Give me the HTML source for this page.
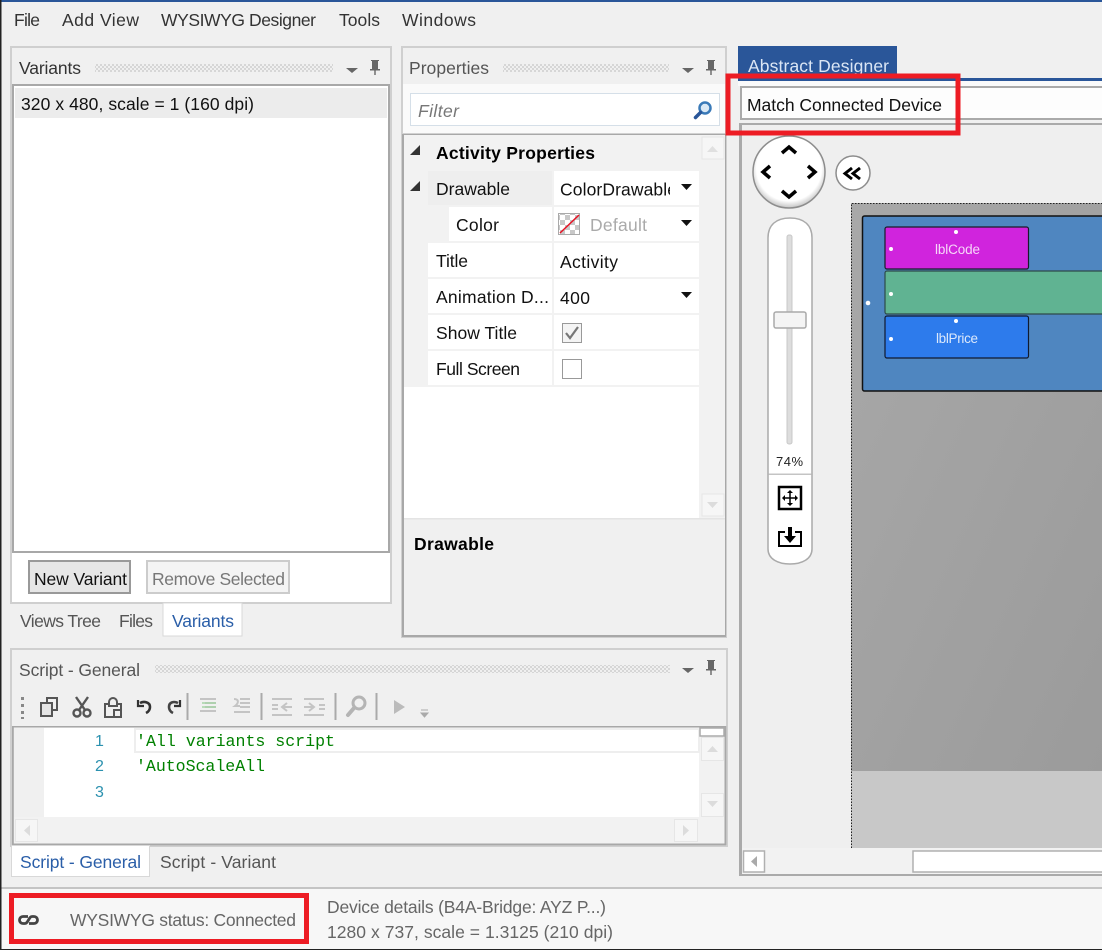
<!DOCTYPE html>
<html><head><meta charset="utf-8"><title>Designer</title>
<style>
html,body{margin:0;padding:0;background:#fff;width:1105px;height:950px;overflow:hidden}
svg{display:block;position:absolute;left:0;top:0}
text{font-family:"Liberation Sans",sans-serif;font-size:17.5px;fill:#333;white-space:pre}
.m{font-family:"Liberation Mono",monospace;font-size:16.6px;fill:#008000}
.n{fill:#2b91af;font-size:16px}
.b{font-weight:bold;fill:#000}
.k{fill:#111}
.g{fill:#666}
.bl{fill:#2a5ea8}
</style></head><body>
<svg width="1105" height="950" viewBox="0 0 1105 950" xmlns="http://www.w3.org/2000/svg">
<defs>
<pattern id="grip" width="4" height="4" patternUnits="userSpaceOnUse"><rect width="4" height="4" fill="#f0f0f0"/><rect width="2" height="2" fill="#d6d6d6"/><rect x="2" y="2" width="2" height="2" fill="#d6d6d6"/></pattern>
<linearGradient id="cv" x1="0" y1="0" x2="1" y2="1"><stop offset="0" stop-color="#a8a8a8"/><stop offset="1" stop-color="#9b9b9b"/></linearGradient>
<radialGradient id="ball" cx="0.5" cy="0.45" r="0.55"><stop offset="0.82" stop-color="#fff"/><stop offset="1" stop-color="#c4c4c4"/></radialGradient>
<pattern id="chk" width="10" height="10" patternUnits="userSpaceOnUse"><rect width="10" height="10" fill="#fff"/><rect width="5" height="5" fill="#c8c8c8"/><rect x="5" y="5" width="5" height="5" fill="#c8c8c8"/></pattern>
</defs>

<rect width="1105" height="950" fill="#f0f0f0"/>
<rect width="1105" height="2" fill="#2a5699"/>
<rect x="0" y="0" width="1.5" height="950" fill="#222"/>

<!-- Menu -->
<text x="14" y="26" textLength="26" lengthAdjust="spacing">File</text>
<text x="62" y="26" textLength="77" lengthAdjust="spacing">Add View</text>
<text x="161" y="26" textLength="155" lengthAdjust="spacing">WYSIWYG Designer</text>
<text x="339" y="26" textLength="41" lengthAdjust="spacing">Tools</text>
<text x="402" y="26" textLength="74" lengthAdjust="spacing">Windows</text>

<!-- Variants panel -->
<rect x="11" y="47" width="380" height="556" fill="#f0f0f0" stroke="#cfcfcf" stroke-width="2"/>
<text x="19" y="74" textLength="62" lengthAdjust="spacing">Variants</text>
<rect x="95" y="64" width="238" height="8" fill="url(#grip)"/>
<path d="M346 68h12l-6 5z" fill="#666"/>
<path d="M371 60h8v1h-1v8h2v1.500h-4.300v4.500h-1.400v-4.500h-4.300v-1.500h2v-8h-1z" fill="#666"/>
<rect x="12" y="84" width="378" height="518" fill="#fff"/>
<rect x="13" y="85" width="376" height="467" fill="#fff" stroke="#a8a8a8" stroke-width="2"/>
<rect x="15" y="88" width="372" height="30" fill="#ececec"/>
<text x="21" y="110" class="k" textLength="233" lengthAdjust="spacing">320 x 480, scale = 1 (160 dpi)</text>
<rect x="29" y="561" width="101" height="32" fill="#e6e6e6" stroke="#999" stroke-width="2"/>
<text x="34" y="585" class="k" textLength="93" lengthAdjust="spacing">New Variant</text>
<rect x="147" y="561" width="142" height="32" fill="#f4f4f4" stroke="#ccc" stroke-width="2"/>
<text x="152" y="585" style="fill:#777" textLength="133" lengthAdjust="spacing">Remove Selected</text>

<!-- Left tabs -->
<rect x="163" y="603" width="79" height="33" fill="#fff" stroke="#d8d8d8"/>
<text x="20" y="627" class="g" style="fill:#555" textLength="81" lengthAdjust="spacing">Views Tree</text>
<text x="119" y="627" style="fill:#555" textLength="34" lengthAdjust="spacing">Files</text>
<text x="172" y="627" class="bl" textLength="62" lengthAdjust="spacing">Variants</text>

<!-- Properties panel -->
<rect x="402" y="47" width="324" height="590" fill="#f0f0f0" stroke="#cfcfcf" stroke-width="2"/>
<text x="409" y="74" style="fill:#555" textLength="80" lengthAdjust="spacing">Properties</text>
<rect x="503" y="64" width="166" height="8" fill="url(#grip)"/>
<path d="M682 68h12l-6 5z" fill="#666"/>
<path d="M707 60h8v1h-1v8h2v1.500h-4.300v4.500h-1.400v-4.500h-4.300v-1.500h2v-8h-1z" fill="#666"/>
<rect x="403" y="84" width="322" height="50" fill="#fafafa"/>
<rect x="410.500" y="93.500" width="309" height="32" fill="#fff" stroke="#d5dfe8"/>
<text x="418" y="117" style="fill:#777;font-style:italic" textLength="41" lengthAdjust="spacing">Filter</text>
<circle cx="705" cy="108" r="5.500" fill="#dbe9f5" stroke="#3a7ab8" stroke-width="2.500"/>
<path d="M700.500 112.500l-5 5" stroke="#2a5699" stroke-width="3.500" stroke-linecap="round"/>
<rect x="403" y="133.500" width="322" height="2" fill="#a8a8a8"/>
<rect x="402" y="134" width="2" height="502" fill="#a8a8a8"/>
<rect x="724.500" y="134" width="1.500" height="502" fill="#a8a8a8"/>
<rect x="402" y="635" width="324" height="2" fill="#a8a8a8"/>
<rect x="404" y="135" width="321" height="383" fill="#f2f2f2"/>
<rect x="404" y="387" width="295" height="131" fill="#fff"/>
<rect x="404" y="518" width="321" height="117" fill="#f0f0f0"/>
<rect x="404" y="518" width="321" height="1.500" fill="#e4e4e4"/>

<!-- rows -->
<rect x="428" y="171" width="124" height="34" fill="#eee"/>
<rect x="554" y="171" width="145" height="34" fill="#fff"/>
<rect x="449" y="207" width="103" height="34" fill="#fff"/>
<rect x="554" y="207" width="145" height="34" fill="#fff"/>
<rect x="428" y="243" width="124" height="34" fill="#fff"/>
<rect x="554" y="243" width="145" height="34" fill="#fff"/>
<rect x="428" y="279" width="124" height="34" fill="#fff"/>
<rect x="554" y="279" width="145" height="34" fill="#fff"/>
<rect x="428" y="315" width="124" height="34" fill="#fff"/>
<rect x="554" y="315" width="145" height="34" fill="#fff"/>
<rect x="428" y="351" width="124" height="34" fill="#fff"/>
<rect x="554" y="351" width="145" height="34" fill="#fff"/>
<path d="M420 145v10h-10z" fill="#333"/>
<path d="M420 181v10h-10z" fill="#333"/>
<text x="436" y="159" class="b" textLength="159" lengthAdjust="spacing">Activity Properties</text>
<text x="436" y="195" class="k" textLength="74" lengthAdjust="spacing">Drawable</text>
<svg x="554" y="171" width="116" height="34"><text x="6" y="24.500" class="k" textLength="117" lengthAdjust="spacing">ColorDrawable</text></svg>
<path d="M681 184h11l-5.500 6z" fill="#111"/>
<text x="456" y="231" class="k" textLength="43" lengthAdjust="spacing">Color</text>
<rect x="558.500" y="213.500" width="21" height="21" fill="url(#chk)" stroke="#aaa"/>
<path d="M560 233l19-18" stroke="#e81123" stroke-width="1.500"/>
<text x="590" y="231" style="fill:#aaa" textLength="57" lengthAdjust="spacing">Default</text>
<path d="M681 220h11l-5.500 6z" fill="#111"/>
<text x="436" y="267" class="k" textLength="32" lengthAdjust="spacing">Title</text>
<text x="560" y="268" class="k" textLength="58" lengthAdjust="spacing">Activity</text>
<text x="436" y="303" class="k" textLength="113" lengthAdjust="spacing">Animation D...</text>
<text x="560" y="304" class="k" textLength="30" lengthAdjust="spacing">400</text>
<path d="M681 292h11l-5.500 6z" fill="#111"/>
<text x="436" y="339" class="k" textLength="81" lengthAdjust="spacing">Show Title</text>
<rect x="562.500" y="323.500" width="19" height="19" fill="#f4f4f4" stroke="#999"/>
<path d="M566 333l4 5 8-11" fill="none" stroke="#777" stroke-width="2.200"/>
<text x="436" y="375" class="k" textLength="84" lengthAdjust="spacing">Full Screen</text>
<rect x="562.500" y="359.500" width="19" height="19" fill="#fff" stroke="#999"/>
<!-- grid scrollbar -->
<rect x="702" y="137" width="22" height="22" fill="#f6f6f6" stroke="#e6e6e6"/>
<path d="M707 152h11l-5.500-6z" fill="#e0e0e0"/>
<rect x="702" y="494" width="22" height="22" fill="#f6f6f6" stroke="#e6e6e6"/>
<path d="M707 502h11l-5.500 6z" fill="#dcdcdc"/>
<text x="414" y="550" class="b" textLength="80" lengthAdjust="spacing">Drawable</text>

<!-- Script panel -->
<rect x="11" y="649" width="716" height="197" fill="#f0f0f0" stroke="#cfcfcf" stroke-width="2"/>
<text x="19" y="676" style="fill:#555" textLength="121" lengthAdjust="spacing">Script - General</text>
<rect x="155" y="665" width="515" height="8" fill="url(#grip)"/>
<path d="M682 668h12l-6 5z" fill="#666"/>
<path d="M707 660h8v1h-1v8h2v1.500h-4.300v4.500h-1.400v-4.500h-4.300v-1.500h2v-8h-1z" fill="#666"/>
<!-- toolbar -->
<g fill="#888"><rect x="21" y="697" width="3" height="3"/><rect x="21" y="704" width="3" height="3"/><rect x="21" y="711" width="3" height="3"/><rect x="21" y="717" width="3" height="2"/></g>
<g fill="none" stroke="#555" stroke-width="2">
<rect x="41" y="703" width="11" height="13" fill="#e4e4e4"/>
<path d="M47 703v-5h10v12h-5"/>
<circle cx="77" cy="713" r="3.500" stroke-width="2.400"/><circle cx="87" cy="713" r="3.500" stroke-width="2.400"/>
<path d="M76 697l9 13M88 697l-9 13" stroke-width="2.400"/>
<path d="M109 704h-4v13h16v-13h-4"/><path d="M109 706v-4a4 4 0 0 1 8 0v4z"/><path d="M114 717v-7h7"/>
</g>
<g fill="none" stroke="#333" stroke-width="2.600">
<path d="M140 703c4-2 10-1 10 4 0 3-2 5-4 6"/><path d="M138 700v6h6" stroke-width="2.200"/>
<path d="M178 703c-4-2-9-1-9 4 0 3 2 5 4 6" stroke="#444"/><path d="M180 700v6h-6" stroke-width="2.200"/>
</g>
<g fill="#aaa"><rect x="186.500" y="693" width="2" height="27"/><rect x="260.500" y="693" width="2" height="27"/><rect x="334.500" y="693" width="2" height="27"/><rect x="375.500" y="693" width="2" height="27"/></g>
<g stroke="#c4c4c4" stroke-width="2" fill="none">
<path d="M200 699h16M205 703h11M205 707h11M200 711h16"/>
<path d="M240 699h10M240 703h10M240 707h10M234 712h16M234 699c5 0 5 4 1 7h5"/>
<path d="M272 705h6M272 709h6M272 699h20M272 715h20M282 707h10M287 703l-5 4 5 4"/>
<path d="M319 705h6M319 709h6M304 699h20M304 715h20M304 707h10M309 703l5 4-5 4"/>
</g>
<path d="M202 703h14M202 707h14" stroke="#a6d4a6" stroke-width="1.500"/>
<circle cx="359" cy="703" r="6" fill="none" stroke="#b4b4b4" stroke-width="3"/>
<path d="M354 708l-6 7" stroke="#b4b4b4" stroke-width="4" stroke-linecap="round"/>
<path d="M394 700l11 7-11 7z" fill="#bbb"/>
<path d="M421 710h7M421 713h7l-3.500 4z" fill="#aaa" stroke="#aaa"/>
<!-- editor -->
<rect x="12" y="726" width="714" height="118.500" fill="#f2f2f2"/>
<rect x="12" y="726" width="714" height="1.500" fill="#a8a8a8"/>
<rect x="12" y="726" width="1.800" height="119" fill="#a8a8a8"/>
<rect x="724.500" y="726" width="1.800" height="119" fill="#a8a8a8"/>
<rect x="12" y="843.500" width="714" height="1.800" fill="#a8a8a8"/>
<rect x="14" y="728" width="30" height="89" fill="#f0f0f0"/>
<rect x="44" y="728" width="655" height="89" fill="#fff"/>
<rect x="135" y="729" width="564" height="23" fill="#fff" stroke="#eee" stroke-width="2"/>
<text x="95" y="746" class="n" textLength="8" lengthAdjust="spacing">1</text>
<text x="95" y="771" class="n" textLength="9" lengthAdjust="spacing">2</text>
<text x="95" y="797" class="n" textLength="9" lengthAdjust="spacing">3</text>
<text x="136" y="746" class="m" textLength="199" lengthAdjust="spacing">'All variants script</text>
<text x="136" y="771" class="m" textLength="129" lengthAdjust="spacing">'AutoScaleAll</text>
<rect x="700" y="728" width="24" height="8" fill="#fff" stroke="#aaa" stroke-width="1.500"/>
<rect x="701.500" y="737.500" width="22" height="23" fill="#f6f6f6" stroke="#e6e6e6"/>
<path d="M707 752h11l-5.500-6z" fill="#dcdcdc"/>
<rect x="701.500" y="793.500" width="22" height="23" fill="#f6f6f6" stroke="#e6e6e6"/>
<path d="M707 801h11l-5.500 6z" fill="#dcdcdc"/>
<rect x="15.500" y="819.500" width="22" height="22" fill="#f6f6f6" stroke="#e6e6e6"/>
<path d="M30 825v11l-6-5.500z" fill="#dcdcdc"/>
<rect x="674.500" y="819.500" width="23" height="22" fill="#f6f6f6" stroke="#e6e6e6"/>
<path d="M683 825v11l6-5.500z" fill="#dcdcdc"/>
<!-- Script tabs -->
<rect x="11.500" y="845.500" width="138" height="31" fill="#fff" stroke="#d8d8d8"/>
<text x="20" y="868" class="bl" textLength="121" lengthAdjust="spacing">Script - General</text>
<text x="160" y="868" style="fill:#555" textLength="116" lengthAdjust="spacing">Script - Variant</text>

<!-- Designer -->
<rect x="738" y="46" width="159" height="32" fill="#2a5699"/>
<text x="748" y="72" style="fill:#dbe6f5" textLength="141" lengthAdjust="spacing">Abstract Designer</text>
<rect x="738" y="78" width="367" height="3" fill="#2a5699"/>
<rect x="738" y="81" width="367" height="5" fill="#fafafa"/>
<rect x="740" y="86" width="365" height="2" fill="#aaa"/>
<rect x="740" y="88" width="365" height="30" fill="#fdfdfd"/>
<rect x="740" y="118" width="365" height="2" fill="#aaa"/>
<rect x="740" y="86" width="2" height="34" fill="#aaa"/>
<text x="747" y="111" class="k" textLength="195" lengthAdjust="spacing">Match Connected Device</text>
<rect x="740" y="123" width="365" height="2" fill="#aaa"/>
<rect x="742" y="125" width="363" height="723" fill="#efefef"/>
<rect x="739" y="123" width="3" height="753" fill="#aaa"/>

<!-- Canvas -->
<rect x="851" y="203" width="254" height="568" fill="url(#cv)"/>
<rect x="851" y="771" width="254" height="77" fill="#c8c8c8"/>
<path d="M851.500 848V203.500H1105" fill="none" stroke="#222" stroke-dasharray="1.500 1.500"/>
<rect x="862.500" y="216" width="245" height="175" rx="2" fill="#4f86c0" stroke="#111" stroke-width="1.500"/>
<rect x="885" y="227" width="143.500" height="42" rx="2" fill="#d024dd" stroke="#1a1a2a" stroke-width="1.200"/>
<rect x="885" y="271" width="225" height="43" rx="2" fill="#60b392" stroke="#2d4a48" stroke-width="1.200"/>
<rect x="885" y="316" width="143.500" height="42" rx="2" fill="#2d7bec" stroke="#101a30" stroke-width="1.200"/>
<text x="935" y="254" style="fill:#f6d6f8;font-size:13.500px" textLength="45" lengthAdjust="spacing">lblCode</text>
<text x="936" y="343" style="fill:#dbe8fb;font-size:13.500px" textLength="42" lengthAdjust="spacing">lblPrice</text>
<g fill="#fff"><circle cx="956" cy="232" r="2"/><circle cx="891" cy="249" r="2"/><circle cx="891" cy="294" r="2"/><circle cx="868" cy="303" r="2.300"/><circle cx="956" cy="321" r="2"/><circle cx="891" cy="339" r="2"/></g>

<!-- Nav -->
<circle cx="789" cy="172" r="36" fill="url(#ball)" stroke="#8d8d8d" stroke-width="1.500"/>
<g fill="none" stroke="#000" stroke-width="3.500" stroke-linejoin="miter">
<path d="M782 153l7-6 7 6"/><path d="M782 191l7 6 7-6"/><path d="M770 166l-7 6 7 6"/><path d="M808 166l7 6-7 6"/>
</g>
<circle cx="853" cy="173" r="17" fill="#fff" stroke="#8d8d8d" stroke-width="1.500"/>
<path d="M852 168l-7 5.500 7 5.500M860 168l-7 5.500 7 5.500" fill="none" stroke="#000" stroke-width="3"/>

<!-- Slider -->
<path d="M768 238c0-13 8-20 22-20s22 7 22 20v311c0 10-10 15-22 15s-22-5-22-15z" fill="#fff" stroke="#aaa" stroke-width="1.500"/>
<rect x="787" y="235" width="5" height="209" rx="2" fill="#ddd" stroke="#c8c8c8"/>
<rect x="774" y="312" width="32" height="16" rx="2" fill="#f4f4f4" stroke="#aaa" stroke-width="1.500"/>
<text x="776" y="466" style="font-size:13px;fill:#222" textLength="27" lengthAdjust="spacing">74%</text>
<rect x="768.500" y="473.500" width="43" height="1.500" fill="#c4c4c4"/>
<rect x="779" y="487" width="22" height="22" fill="#fff" stroke="#000" stroke-width="2.500"/>
<path d="M790 491v14M783 498h14" stroke="#000" stroke-width="1.500"/>
<path d="M790 490l-3 3h6zM790 506l-3-3h6zM782 498l3-3v6zM798 498l-3-3v6z" fill="#000"/>
<path d="M785 532h-6v14h22v-14h-6" fill="none" stroke="#000" stroke-width="2"/>
<path d="M788 527h4v9h4l-6 7-6-7h4z" fill="#000"/>

<!-- designer scrollbar -->
<rect x="742" y="848" width="363" height="26" fill="#f2f2f2"/>
<rect x="743.500" y="851" width="21" height="21" fill="#fff" stroke="#b0b0b0" stroke-width="1.500"/>
<path d="M757 856v11l-6-5.500z" fill="#aaa"/>
<rect x="913" y="851" width="192" height="21" fill="#fff" stroke="#b0b0b0" stroke-width="1.500"/>
<rect x="739" y="874" width="366" height="2" fill="#aaa"/>

<!-- Status -->
<rect x="1.500" y="887" width="1104" height="2" fill="#c4c4c4"/>
<rect x="1.500" y="889" width="1104" height="60" fill="#f7f7f7"/>
<rect x="0" y="949" width="1105" height="1" fill="#222"/>
<path d="M28 916.500h-5a3.500 3.500 0 0 0 0 7h2c3 0 4-7 7-7h2a3.500 3.500 0 0 1 0 7h-5" fill="none" stroke="#444" stroke-width="2.800"/>
<text x="70" y="926" class="g" textLength="226" lengthAdjust="spacing">WYSIWYG status: Connected</text>
<text x="327" y="913" class="g" textLength="279" lengthAdjust="spacing">Device details (B4A-Bridge: AYZ P...)</text>
<text x="327" y="938" class="g" textLength="286" lengthAdjust="spacing">1280 x 737, scale = 1.3125 (210 dpi)</text>

<!-- Red boxes -->
<rect x="11.500" y="895.500" width="295" height="46" fill="none" stroke="#ed1c24" stroke-width="5"/>
<rect x="728" y="76" width="230" height="57" fill="none" stroke="#ed1c24" stroke-width="5"/>
<!-- right edge strip -->
<rect x="1102" y="0" width="3" height="950" fill="#fff"/>
</svg>
</body></html>
